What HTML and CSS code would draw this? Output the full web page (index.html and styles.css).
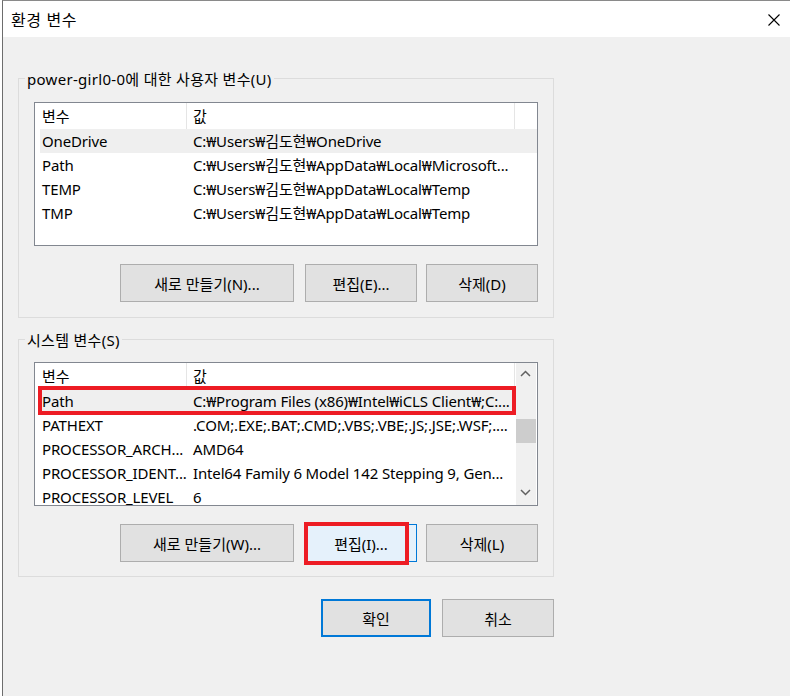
FILE: index.html
```html
<!DOCTYPE html>
<html lang="ko">

<head>
  <meta charset="UTF-8" />
  <title>환경 변수</title>
  <meta name="viewport" content="width=device-width, initial-scale=1.0" />
  <link rel="stylesheet" href="styles.css">
</head>

<body>
  <div class="window">
    <!-- 타이틀 바 -->
    <div class="titlebar">
      <span class="title">환경 변수</span>
      <svg class="close" width="12" height="12" viewBox="0 0 12 12">
        <path d="M0.5 0.5 L11.5 11.5 M11.5 0.5 L0.5 11.5" stroke="#000" stroke-width="1.1" fill="none" />
      </svg>
    </div>

    <div class="content">
      <!-- 사용자 변수 -->
      <fieldset class="group group-user">
        <legend>power-girl0-0에 대한 사용자 변수(U)</legend>
        <div class="list">
          <div class="list-body">
            <div class="list-row list-head"><span>변수</span><span>값</span></div>
            <div class="list-row selected"><span>OneDrive</span><span>C:₩Users₩김도현₩OneDrive</span></div>
            <div class="list-row"><span>Path</span><span>C:₩Users₩김도현₩AppData₩Local₩Microsoft...</span></div>
            <div class="list-row"><span>TEMP</span><span>C:₩Users₩김도현₩AppData₩Local₩Temp</span></div>
            <div class="list-row"><span>TMP</span><span>C:₩Users₩김도현₩AppData₩Local₩Temp</span></div>
          </div>
        </div>
        <div class="actions">
          <button class="btn btn-new">새로 만들기(N)...</button>
          <button class="btn btn-edit">편집(E)...</button>
          <button class="btn btn-del">삭제(D)</button>
        </div>
      </fieldset>

      <!-- 시스템 변수 -->
      <fieldset class="group group-system">
        <legend>시스템 변수(S)</legend>
        <div class="list">
          <div class="list-body">
            <div class="list-row list-head"><span>변수</span><span>값</span></div>
            <div class="list-row selected"><span>Path</span><span>C:₩Program Files (x86)₩Intel₩iCLS Client₩;C:...</span></div>
            <div class="list-row"><span>PATHEXT</span><span>.COM;.EXE;.BAT;.CMD;.VBS;.VBE;.JS;.JSE;.WSF;....</span></div>
            <div class="list-row"><span>PROCESSOR_ARCH...</span><span>AMD64</span></div>
            <div class="list-row"><span>PROCESSOR_IDENT...</span><span>Intel64 Family 6 Model 142 Stepping 9, Gen...</span></div>
            <div class="list-row"><span>PROCESSOR_LEVEL</span><span>6</span></div>
          </div>
          <div class="scrollbar">
            <div class="scroll-btn">
              <svg width="20" height="20" viewBox="0 0 20 20">
                <path d="M5 13 L9.5 8.5 L14 13" stroke="#606060" stroke-width="1.5" fill="none" />
              </svg>
            </div>
            <div class="scroll-track">
              <div class="scroll-thumb"></div>
            </div>
            <div class="scroll-btn">
              <svg width="20" height="20" viewBox="0 0 20 20">
                <path d="M5 5 L9.5 9.5 L14 5" stroke="#606060" stroke-width="1.5" fill="none" />
              </svg>
            </div>
          </div>
          <!-- 강조 표시 -->
          <span class="mark mark-row"></span>
        </div>
        <div class="actions">
          <button class="btn btn-new">새로 만들기(W)...</button>
          <button class="btn btn-edit focused">편집(I)...<span class="mark mark-btn"></span></button>
          <button class="btn btn-del">삭제(L)</button>
        </div>
      </fieldset>

      <div class="dialog-actions">
        <button class="btn btn-ok">확인</button>
        <button class="btn btn-cancel">취소</button>
      </div>
    </div>
  </div>
</body>

</html>
```

FILE: styles.css
```css
body {
  margin: 0;
  padding: 0;
  background: #fff;
  font-family: "Noto Sans", "Noto Sans CJK KR", sans-serif;
  font-size: 15px;
  color: #000;
}

.window {
  margin-left: 2px;
  height: 696px;
  border-left: 1px solid #6d6d6d;
  border-top: 1px solid #8a8a8a;
  box-sizing: border-box;
  background: #f0f0f0;
  display: flex;
  flex-direction: column;
}

.titlebar {
  height: 36px;
  background: #fff;
  display: flex;
  align-items: center;
  justify-content: space-between;
  padding: 0 10px 0 8px;
}

.title {
  font-size: 16px;
  letter-spacing: 0.6px;
}

.close {
  display: block;
  margin-top: 1px;
}

.content {
  padding-top: 30px;
}

/* 그룹 박스 */
.group {
  margin: 0 0 0 15px;
  width: 536px;
  box-sizing: border-box;
  border: 1px solid #dcdcdc;
  padding: 12px 15px 15px;
  min-inline-size: 0;
}

.group legend {
  padding: 2px 2px 0;
  margin-left: -9px;
  line-height: 20px;
  letter-spacing: 0.3px;
}

.group-user {
  padding-top: 13px;
}

.group-system {
  margin-top: 10px;
  padding-bottom: 14px;
}

/* 목록 */
.list {
  position: relative;
  height: 144px;
  box-sizing: border-box;
  border: 1px solid #828790;
  background: #fff;
  display: flex;
  overflow: hidden;
}

.list-body {
  flex: 1;
  padding-left: 5px;
  overflow: hidden;
}

.list-row {
  display: grid;
  grid-template-columns: 147px 328px;
  height: 24px;
  line-height: 24px;
  white-space: nowrap;
  letter-spacing: -0.15px;
}

.list-row span:first-child {
  padding-left: 2px;
}

.list-row span:last-child {
  padding-left: 6px;
}

.list-head {
  height: 26px;
  line-height: 26px;
  letter-spacing: 0;
}

.list-head span {
  border-right: 1px solid #e5e5e5;
}

.list-row.selected {
  background: #efefef;
}

.scrollbar {
  width: 20px;
  margin-right: 1px;
  background: #f0f0f0;
  display: flex;
  flex-direction: column;
}

.scroll-btn {
  height: 20px;
}

.scroll-btn svg {
  display: block;
}

.scroll-track {
  flex: 1;
}

.scroll-thumb {
  margin-top: 36px;
  height: 24px;
  background: #cdcdcd;
}

/* 버튼 */
.actions {
  display: flex;
  justify-content: flex-end;
  margin-top: 18px;
}

.btn {
  height: 38px;
  padding: 0;
  border: 1px solid #adadad;
  background: #e1e1e1;
  font-family: "Noto Sans", "Noto Sans CJK KR", sans-serif;
  font-size: 15px;
  color: #000;
  box-sizing: border-box;
}

.btn-new {
  width: 174px;
}

.btn-edit {
  width: 112px;
  margin-left: 11px;
}

.btn-del {
  width: 112px;
  margin-left: 9px;
}

.btn.focused {
  position: relative;
  border-color: #0078d7;
  background: #e5f1fb;
}

.dialog-actions {
  display: flex;
  justify-content: flex-end;
  margin: 22px 0 0 15px;
  width: 536px;
}

.btn-ok {
  width: 110px;
  border: 2px solid #0078d7;
}

.btn-cancel {
  width: 112px;
  margin-left: 11px;
}

/* 빨간 강조 박스 */
.mark {
  position: absolute;
  border: 4px solid #ed1c24;
  box-sizing: border-box;
  pointer-events: none;
}

.mark-row {
  left: 3px;
  top: 23px;
  width: 478px;
  height: 29px;
}

.mark-btn {
  left: -2px;
  top: -3px;
  width: 105px;
  height: 43px;
}
```
